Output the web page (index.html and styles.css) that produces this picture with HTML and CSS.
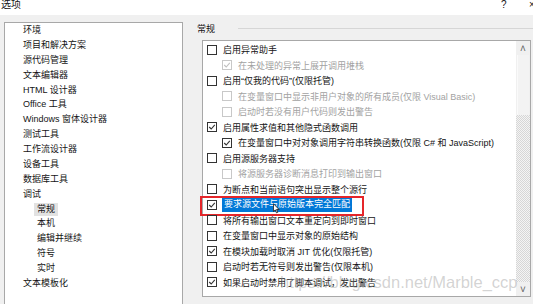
FILE: index.html
```html
<!DOCTYPE html>
<html lang="zh-CN">
<head>
  <meta charset="UTF-8" />
  <meta name="viewport" content="width=device-width, initial-scale=1.0" />
  <title>选项</title>
  <link rel="stylesheet" href="styles.css">
</head>
<body>
  <!-- window caption -->
  <div class="titlebar">
    <span class="title">选项</span>
    <span class="caption-btns"><span>?</span><span class="close">×</span></span>
  </div>

  <div class="main">
    <!-- category tree -->
    <ul class="tree">
      <li>环境</li>
      <li>项目和解决方案</li>
      <li>源代码管理</li>
      <li>文本编辑器</li>
      <li>HTML 设计器</li>
      <li>Office 工具</li>
      <li>Windows 窗体设计器</li>
      <li>测试工具</li>
      <li>工作流设计器</li>
      <li>设备工具</li>
      <li>数据库工具</li>
      <li>调试</li>
      <li class="sub selected"><span>常规</span></li>
      <li class="sub"><span>本机</span></li>
      <li class="sub"><span>编辑并继续</span></li>
      <li class="sub"><span>符号</span></li>
      <li class="sub"><span>实时</span></li>
      <li>文本模板化</li>
    </ul>

    <div class="panel">
      <div class="group-head"><span>常规</span><i class="group-line"></i></div>

      <div class="list">
        <div class="rows">
          <div class="row"><span class="cb"></span><span class="txt">启用异常助手</span></div>
          <div class="row ind off"><span class="cb"><svg viewBox="0 0 8 8"><polyline points="1.2,4 3.2,6 6.8,1.8"/></svg></span><span class="txt">在未处理的异常上展开调用堆栈</span></div>
          <div class="row"><span class="cb"></span><span class="txt">启用“仅我的代码”(仅限托管)</span></div>
          <div class="row ind off"><span class="cb"></span><span class="txt">在变量窗口中显示非用户对象的所有成员(仅限 Visual Basic)</span></div>
          <div class="row ind off"><span class="cb"></span><span class="txt">启动时若没有用户代码则发出警告</span></div>
          <div class="row"><span class="cb"><svg viewBox="0 0 8 8"><polyline points="1.2,4 3.2,6 6.8,1.8"/></svg></span><span class="txt">启用属性求值和其他隐式函数调用</span></div>
          <div class="row ind"><span class="cb"><svg viewBox="0 0 8 8"><polyline points="1.2,4 3.2,6 6.8,1.8"/></svg></span><span class="txt">在变量窗口中对对象调用字符串转换函数(仅限 C# 和 JavaScript)</span></div>
          <div class="row"><span class="cb"></span><span class="txt">启用源服务器支持</span></div>
          <div class="row ind off"><span class="cb"></span><span class="txt">将源服务器诊断消息打印到输出窗口</span></div>
          <div class="row"><span class="cb"></span><span class="txt">为断点和当前语句突出显示整个源行</span></div>
          <div class="row current">
            <span class="cb"><svg viewBox="0 0 8 8"><polyline points="1.2,4 3.2,6 6.8,1.8"/></svg></span><span class="txt">要求源文件与原始版本完全匹配</span>
            <span class="mark"></span>
            <svg class="cursor" viewBox="0 0 8 12"><path d="M0.5 0.5 L0.5 9.5 L2.6 7.6 L4 11 L5.4 10.4 L4 7.2 L7 7.2 Z"/></svg>
          </div>
          <div class="row"><span class="cb"></span><span class="txt">将所有输出窗口文本重定向到即时窗口</span></div>
          <div class="row"><span class="cb"></span><span class="txt">在变量窗口中显示对象的原始结构</span></div>
          <div class="row"><span class="cb"><svg viewBox="0 0 8 8"><polyline points="1.2,4 3.2,6 6.8,1.8"/></svg></span><span class="txt">在模块加载时取消 JIT 优化(仅限托管)</span></div>
          <div class="row"><span class="cb"></span><span class="txt">启动时若无符号则发出警告(仅限本机)</span></div>
          <div class="row"><span class="cb"><svg viewBox="0 0 8 8"><polyline points="1.2,4 3.2,6 6.8,1.8"/></svg></span><span class="txt">如果启动时禁用了脚本调试，发出警告</span></div>
        </div>

        <div class="scrollbar">
          <span class="sb-btn">&#708;</span>
          <span class="sb-thumb"></span>
          <span class="sb-track"></span>
          <span class="sb-btn">&#709;</span>
        </div>
      </div>
    </div>
  </div>

  <div class="watermark">https://blog.csdn.net/Marble_ccp</div>
</body>
</html>
```

FILE: styles.css
```css
html, body {
  margin: 0;
  padding: 0;
}
body {
  width: 533px;
  height: 304px;
  overflow: hidden;
  position: relative;
  background: #f0f0f0;
  color: #141414;
  font-family: "Liberation Sans", "Noto Sans CJK SC", sans-serif;
  font-size: 9px;
}
.titlebar {
  height: 15px;
  background: #ffffff;
  display: flex;
  justify-content: space-between;
  font-size: 10px;
  line-height: 10px;
}
.title {
  padding-left: 1px;
}
.caption-btns {
  display: flex;
  gap: 20px;
  margin-right: -4px;
}
.caption-btns span {
  width: 8px;
}
.main {
  display: flex;
  padding-left: 4px;
}
/* left tree */
.tree {
  list-style: none;
  margin: 7px 0 0 0;
  padding: 0;
  width: 177px;
  height: 282px;
  background: #ffffff;
  border: 1px solid #a8a8a8;
  border-bottom: none;
}
.tree li {
  padding-left: 18px;
  line-height: 14.88px;
  white-space: nowrap;
}
.tree li.sub {
  padding-left: 29px;
}
.tree li.sub span {
  display: inline-block;
  padding: 0 3px;
  line-height: 13px;
}
.tree li.selected span {
  background: #e2e2e2;
}
/* right panel */
.panel {
  margin-left: 14px;
  flex: 1;
}
.group-head {
  display: flex;
  align-items: center;
  height: 12px;
  margin-top: 7px;
}
.group-line {
  flex: 1;
  margin-left: 23px;
  border-top: 1px solid #d6d6d6;
}
.list {
  display: flex;
  margin: 6px 0 0 5px;
  width: 327px;
  height: 255px;
  background: #ffffff;
  border: 1px solid #a8a8a8;
}
.rows {
  flex: 1;
  padding-top: 1px;
}
.row {
  position: relative;
  display: flex;
  align-items: center;
  height: 15.5px;
  white-space: nowrap;
}
.cb {
  box-sizing: border-box;
  width: 10px;
  height: 10px;
  margin-left: 4px;
  border: 1px solid #333333;
  background: #ffffff;
  display: flex;
}
.cb svg {
  width: 8px;
  height: 8px;
  fill: none;
  stroke: #333333;
  stroke-width: 1.1;
}
.row.ind .cb {
  margin-left: 19px;
}
.txt {
  margin-left: 6px;
}
.row.off .cb {
  border-color: #c8c8c8;
}
.row.off .cb svg {
  stroke: #c0c0c0;
}
.row.off .txt {
  color: #a2a2a2;
}
.row.current .txt {
  margin-left: 5px;
  padding: 0 2px;
  line-height: 15px;
  background: #0078d7;
  color: #ffffff;
}
.mark {
  position: absolute;
  left: -3px;
  top: -1px;
  width: 160px;
  height: 16px;
  border: 2px solid #e5262a;
}
.cursor {
  position: absolute;
  left: 70px;
  top: 6px;
  width: 7px;
  height: 11px;
  fill: #ffffff;
  stroke: #222222;
  stroke-width: 1;
}
/* scrollbar */
.scrollbar {
  width: 14px;
  display: flex;
  flex-direction: column;
  background: #f0f0f0;
}
.sb-btn {
  height: 14px;
  line-height: 16px;
  text-align: center;
  font-size: 10px;
  color: #606060;
}
.sb-thumb {
  height: 60px;
  margin: 0 1px;
  background: #f3f3f3;
  border-left: 1px solid #fafafa;
}
.sb-track {
  flex: 1;
  background: repeating-conic-gradient(#d6d6d6 0 25%, #f4f4f4 0 50%) 0 0 / 2px 2px;
}
.watermark {
  position: absolute;
  left: 280px;
  top: 273px;
  font-size: 16.5px;
  color: rgba(150, 150, 150, 0.42);
  white-space: nowrap;
}
```
